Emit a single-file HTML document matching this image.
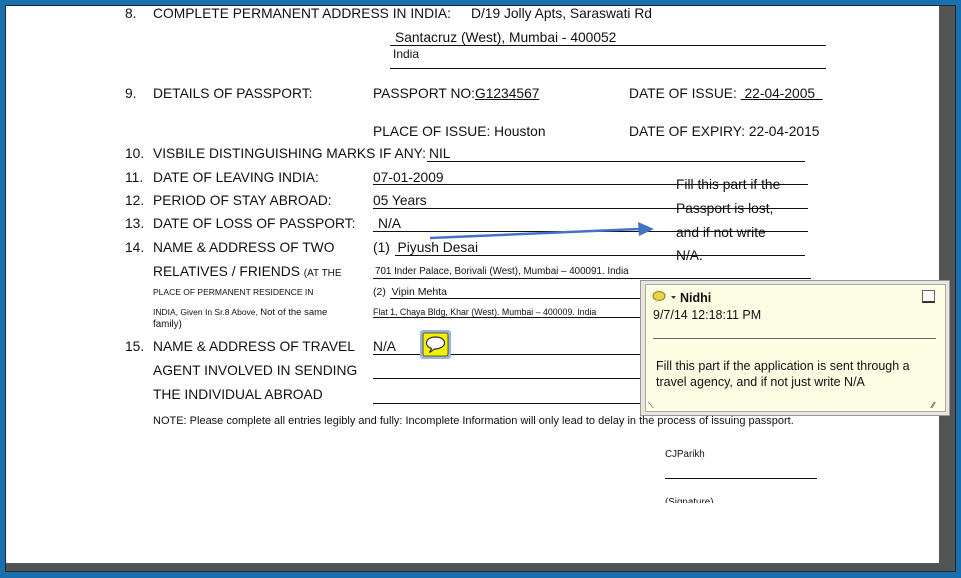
<!DOCTYPE html>
<html><head><meta charset="utf-8"><style>
*{margin:0;padding:0;box-sizing:border-box}
body{width:961px;height:578px;overflow:hidden;position:relative;background:#1a6fae;font-family:"Liberation Sans",sans-serif;color:#111}
#pg{position:absolute;left:5px;top:5px;width:951px;height:567px;background:#525553;border:1px solid #1a2a3a}
#wh{position:absolute;left:0;top:0;width:933px;height:557px;background:#fff}
.t{position:absolute;font-size:13.8px;white-space:nowrap;line-height:16px}
.s{position:absolute;font-size:9.8px;white-space:nowrap;line-height:12px}
.m{position:absolute;font-size:10.5px;white-space:nowrap;line-height:12px}
.l{position:absolute;height:1px;background:#111}
u{text-decoration:underline}
</style></head><body>
<div id="pg"><div id="wh"></div></div>

<div class="t" style="left:125px;top:6px">8.</div><div class="t" style="left:153px;top:6px">COMPLETE PERMANENT ADDRESS IN INDIA:</div>
<div class="t" style="left:471px;top:6px">D/19 Jolly Apts, Saraswati Rd</div>
<div class="t" style="left:395px;top:30px">Santacruz (West), Mumbai - 400052</div>
<div class="l" style="left:390px;top:45px;width:436px"></div>
<div class="m" style="left:393px;top:48px;font-size:12px">India</div>
<div class="l" style="left:390px;top:68px;width:436px"></div>

<div class="t" style="left:125px;top:86px">9.</div><div class="t" style="left:153px;top:86px">DETAILS OF PASSPORT:</div>
<div class="t" style="left:373px;top:86px">PASSPORT NO:<u>G1234567</u></div>
<div class="t" style="left:629px;top:86px">DATE OF ISSUE: <u>&nbsp;22-04-2005&nbsp;&nbsp;</u></div>
<div class="t" style="left:373px;top:124px">PLACE OF ISSUE: Houston</div>
<div class="t" style="left:629px;top:124px">DATE OF EXPIRY: 22-04-2015</div>

<div class="t" style="left:125px;top:146px">10.</div><div class="t" style="left:153px;top:146px">VISBILE DISTINGUISHING MARKS IF ANY:</div>
<div class="t" style="left:429px;top:146px">NIL</div><div class="l" style="left:427px;top:161px;width:378px"></div>
<div class="t" style="left:125px;top:170px">11.</div><div class="t" style="left:153px;top:170px">DATE OF LEAVING INDIA:</div>
<div class="t" style="left:373px;top:170px">07-01-2009</div><div class="l" style="left:373px;top:184px;width:435px"></div>
<div class="t" style="left:125px;top:193px">12.</div><div class="t" style="left:153px;top:193px">PERIOD OF STAY ABROAD:</div>
<div class="t" style="left:373px;top:193px">05 Years</div><div class="l" style="left:373px;top:208px;width:435px"></div>
<div class="t" style="left:125px;top:216px">13.</div><div class="t" style="left:153px;top:216px">DATE OF LOSS OF PASSPORT:</div>
<div class="t" style="left:378px;top:216px">N/A</div><div class="l" style="left:373px;top:231px;width:435px"></div>
<div class="t" style="left:125px;top:240px">14.</div><div class="t" style="left:153px;top:240px">NAME &amp; ADDRESS OF TWO</div>
<div class="t" style="left:373px;top:240px">(1)&nbsp; Piyush Desai</div><div class="l" style="left:395px;top:255px;width:410px"></div>
<div class="t" style="left:153px;top:264px">RELATIVES / FRIENDS <span style="font-size:10px">(AT THE</span></div>
<div class="s" style="left:375px;top:266px">701 Inder Palace, Borivali (West), Mumbai – 400091. India</div>
<div class="l" style="left:373px;top:278px;width:438px"></div>
<div class="s" style="left:153px;top:286px;font-size:8.5px">PLACE OF PERMANENT RESIDENCE IN</div>
<div class="m" style="left:373px;top:286px">(2)&nbsp; Vipin Mehta</div><div class="l" style="left:390px;top:298px;width:250px"></div>
<div class="s" style="left:153px;top:306px;font-size:8.5px">INDIA, Given In Sr.8 Above, <span style="font-size:9.5px">Not of the same</span></div>
<div class="s" style="left:153px;top:319px">family)</div>
<div class="s" style="left:373px;top:306px;font-size:8.8px">Flat 1, Chaya Bldg, Khar (West). Mumbai – 400009. India</div>
<div class="l" style="left:373px;top:317px;width:267px"></div>

<div class="t" style="left:125px;top:339px">15.</div><div class="t" style="left:153px;top:339px">NAME &amp; ADDRESS OF TRAVEL</div>
<div class="t" style="left:373px;top:339px">N/A</div><div class="l" style="left:373px;top:354px;width:267px"></div>
<div class="t" style="left:153px;top:363px">AGENT INVOLVED IN SENDING</div><div class="l" style="left:373px;top:378px;width:267px"></div>
<div class="t" style="left:153px;top:387px">THE INDIVIDUAL ABROAD</div><div class="l" style="left:373px;top:403px;width:267px"></div>
<div class="s" style="left:153px;top:415px;font-size:11px">NOTE: Please complete all entries legibly and fully: Incomplete Information will only lead to delay in the process of issuing passport.</div>

<div class="s" style="left:665px;top:449px">CJParikh</div>
<div class="l" style="left:665px;top:478px;width:152px"></div>
<div style="position:absolute;left:665px;top:497px;width:60px;height:6px;overflow:hidden"><div class="s" style="left:0;top:0">(Signature)</div></div>

<div class="t" style="left:676px;top:177px">Fill this part if the</div>
<div class="t" style="left:676px;top:201px">Passport is lost,</div>
<div class="t" style="left:676px;top:225px">and if not write</div>
<div class="t" style="left:676px;top:248px">N/A.</div>

<svg style="position:absolute;left:0;top:0" width="961" height="578">
<line x1="430" y1="238" x2="640" y2="229" stroke="#4472c4" stroke-width="2.5"/>
<polygon points="638,222 654,229 639,236" fill="#4472c4"/>
<rect x="420" y="330" width="31" height="29" rx="3" fill="#9fb4d0"/>
<rect x="423" y="333" width="25" height="23" rx="2" fill="#f2f200" stroke="#333" stroke-width="0.8"/>
<path d="M435.5 337 c-6 0 -9 3 -9 6 c0 2.5 2 4.5 5 5.5 l-2 4 l5 -3.5 c6 0 10 -3 10 -6 c0 -3 -3 -6 -9 -6z" fill="#fff" stroke="#333" stroke-width="1.2"/>
</svg>

<div style="position:absolute;left:640px;top:280px;width:310px;height:136px;background:#e8e8e0;border:1px solid #999"></div>
<div style="position:absolute;left:645px;top:284px;width:301px;height:128px;background:#fdfde3;border:1px solid #aaa"></div>
<svg style="position:absolute;left:652px;top:290px" width="28" height="14"><ellipse cx="7" cy="6" rx="6" ry="4.5" fill="#e8d34a" stroke="#8a7a20"/><path d="M4 10 l-1 3 l4 -2.5z" fill="#e8d34a"/><path d="M19 6 h5 l-2.5 3z" fill="#333"/></svg>
<div class="t" style="left:680px;top:290px;font-weight:bold;font-size:12.5px">Nidhi</div>
<div class="t" style="left:653px;top:307px;font-size:12.5px">9/7/14 12:18:11 PM</div>
<div style="position:absolute;left:922px;top:290px;width:13px;height:13px;border:1px solid #666;background:#fff;border-bottom:2px solid #333"></div>
<div class="l" style="left:653px;top:338px;width:283px;background:#666"></div>
<div class="t" style="left:656px;top:358px;font-size:12.5px">Fill this part if the application is sent through a</div>
<div class="t" style="left:656px;top:374px;font-size:12.5px">travel agency, and if not just write N/A</div>
<div class="t" style="left:648px;top:398px;font-size:8px">⟍</div>
<div class="t" style="left:932px;top:398px;font-size:8px">⁄⁄</div>
</body></html>
